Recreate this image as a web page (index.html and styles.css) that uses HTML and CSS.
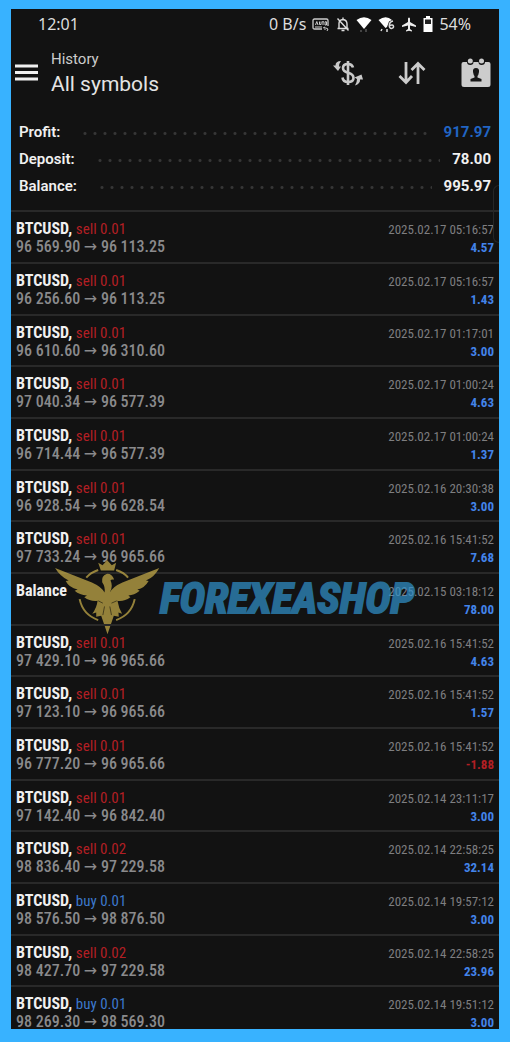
FILE: index.html
```html
<!DOCTYPE html>
<html lang="en">
<head>
<meta charset="utf-8">
<meta name="viewport" content="width=device-width, initial-scale=1">
<title>History</title>
<link rel="stylesheet" href="styles.css">
</head>
<body>
<div class="screen">
  <div class="status">
    <span class="clock">12:01</span>
    <div class="status-right">
      <span>0 B/s</span>
      <svg class="s-auto" viewBox="0 0 18 16" width="18" height="16"><path d="M10 13H2.500Q1 13 1 11.500V4.500Q1 3 2.500 3H14.500Q16 3 16 4.500V10" fill="none" stroke="#ccc" stroke-width="1.300"/><path d="M3.500 9l1.300-3.500L6 9M7.500 5.500v3h1.600v-3M10 5.800h2M11 5.800V9M13 5.800h1.500V9H13zM3 11h7M11 12l2-1v3M14 12l2 1-1 2" fill="none" stroke="#ccc" stroke-width="1"/></svg>
      <svg class="s-bell" viewBox="0 0 14 16" width="14" height="16"><path d="M3 12V7.500Q3 4 7 3.500Q11 4 11 8v4M1.500 12.500h11M7 1.500v2M5.500 14.500h3M1.500 2.500l11 12" fill="none" stroke="#ddd" stroke-width="1.400"/></svg>
      <svg class="s-wifi" viewBox="0 0 16 16" width="16" height="16"><path d="M.5 4Q8-1.500 15.500 4L8 13z" fill="#fff"/><path d="M5 14v2M10 13v3" stroke="#555" stroke-width="1.500"/></svg>
      <svg class="s-wifi6" viewBox="0 0 17 16" width="17" height="16"><path d="M.5 4Q8-1.500 14 4L11 5.500L9 11L7.500 12z" fill="#fff"/><path d="M15 5Q11 6 11.300 10Q11.500 12.500 13.500 12.400Q15.700 12.200 15.500 10.200Q15 8 11.500 9.500M4 13l-1 2M9 13v3" fill="none" stroke="#ddd" stroke-width="1.500"/></svg>
      <svg class="s-plane" viewBox="0 0 16 16" width="16" height="16"><path d="M7 6V2.500Q8 .5 9 2.500V6L15 9.500V11L9 9.500V13L11 14.500V15.500L8 14.800L5 15.500V14.500L7 13V9.500L1 11V9.500z" fill="#eee"/></svg>
      <svg class="s-batt" viewBox="0 0 10 16" width="10" height="16"><path d="M3 0h4v2h2.500v14H.5V2H3z" fill="#fff"/><path d="M2 3.500h6V8H2z" fill="#222"/></svg>
      <span>54%</span>
    </div>
  </div>

  <header class="bar">
    <button class="icon-btn" aria-label="Menu"><svg viewBox="0 0 23 17" width="23" height="17"><path d="M0 2h23M0 8.500h23M0 15h23" stroke="#f0f0f0" stroke-width="2.800"/></svg></button>
    <div class="titles"><p class="subtitle">History</p><h1>All symbols</h1></div>
    <div class="actions">
      <button class="icon-btn" aria-label="Currency"><svg viewBox="0 0 30 28" width="30" height="28"><g fill="none" stroke="#c9c9c9" stroke-width="2.600"><path d="M15 2v24" /><path d="M20 8.500Q19 5 15 5Q10 5 10 9Q10 12.500 15 13.700Q20.500 15 20.500 19Q20.500 23 15 23Q10 23 9.500 18.500"/></g><path d="M8 2Q2.500 2 2.500 6.500H0L5 12L8 7.500H6Q6 4.500 8 2zM22 26.500Q27.500 24.500 27 20.500H30L28.500 15.500L21.500 18.500L24 20Q24 23.500 22 26.500z" fill="#c9c9c9"/></svg></button>
      <button class="icon-btn" aria-label="Sort"><svg viewBox="0 0 28 24" width="28" height="24"><path d="M8 1v20M1.500 15L8 21.500L14 15M20 23V3M13.500 9L20 2.500L26.500 9" fill="none" stroke="#ccc" stroke-width="2.800"/></svg></button>
      <button class="icon-btn" aria-label="Period"><svg viewBox="0 0 30 30" width="30" height="30"><path d="M2.500 4H6Q6 7 9.300 7Q12.500 7 12.500 4H17.500Q17.500 7 20.500 7Q24 7 24 4H27.500Q29.500 4 29.500 6V26.500Q29.500 29 27 29H3Q.5 29 .5 26.500V6Q.5 4 2.500 4z" fill="#ccc"/><circle cx="9.300" cy="3" r="2.500" fill="#ccc"/><circle cx="20.500" cy="3" r="2.500" fill="#ccc"/><path d="M15 10Q18.500 10 18 14Q17.500 17 16.500 18V19.500L20.500 21V23.500H9.500V21L13.500 19.500V18Q12.500 17 12 14Q11.500 10 15 10z" fill="#171717"/></svg></button>
    </div>
  </header>

  <dl class="summary">
    <div class="sum-row"><dt>Profit:</dt><dd class="profit">917.97</dd></div>
    <div class="sum-row"><dt>Deposit:</dt><dd>78.00</dd></div>
    <div class="sum-row"><dt>Balance:</dt><dd>995.97</dd></div>
  </dl>

  <ul class="deals">
    <li><div><p class="name">BTCUSD, <span class="sell">sell 0.01</span></p><p class="price">96 569.90 → 96 113.25</p></div><div class="end"><time>2025.02.17 05:16:57</time><p class="gain">4.57</p></div><i class="edge-handle"></i></li>
    <li><div><p class="name">BTCUSD, <span class="sell">sell 0.01</span></p><p class="price">96 256.60 → 96 113.25</p></div><div class="end"><time>2025.02.17 05:16:57</time><p class="gain">1.43</p></div></li>
    <li><div><p class="name">BTCUSD, <span class="sell">sell 0.01</span></p><p class="price">96 610.60 → 96 310.60</p></div><div class="end"><time>2025.02.17 01:17:01</time><p class="gain">3.00</p></div></li>
    <li><div><p class="name">BTCUSD, <span class="sell">sell 0.01</span></p><p class="price">97 040.34 → 96 577.39</p></div><div class="end"><time>2025.02.17 01:00:24</time><p class="gain">4.63</p></div></li>
    <li><div><p class="name">BTCUSD, <span class="sell">sell 0.01</span></p><p class="price">96 714.44 → 96 577.39</p></div><div class="end"><time>2025.02.17 01:00:24</time><p class="gain">1.37</p></div></li>
    <li><div><p class="name">BTCUSD, <span class="sell">sell 0.01</span></p><p class="price">96 928.54 → 96 628.54</p></div><div class="end"><time>2025.02.16 20:30:38</time><p class="gain">3.00</p></div></li>
    <li><div><p class="name">BTCUSD, <span class="sell">sell 0.01</span></p><p class="price">97 733.24 → 96 965.66</p></div><div class="end"><time>2025.02.16 15:41:52</time><p class="gain">7.68</p></div></li>
    <li><div><p class="name">Balance</p></div><div class="end"><time>2025.02.15 03:18:12</time><p class="gain">78.00</p></div>
      <div class="watermark">
        <svg viewBox="44 60 316 226" width="105" height="75" fill="#ccb14b"><path d="M174 68L187 76L201 61L215 76L228 68L222 92H182z"/><g fill="none" stroke="#ccb14b" stroke-width="6"><path d="M174 90Q151 98 138 113M228 90Q252 98 264 113M118 178Q128 225 174 241M284 178Q274 225 228 241"/></g><path d="M44 84L155 128Q184 141 193 158Q196 141 186 127Q183 108 199 102Q215 100 222 119Q213 117 211 122Q220 139 209 158Q219 140 247 128L358 84Q344 111 318 122L326 123Q314 144 292 149L299 153Q282 167 265 167L271 172Q252 186 232 183Q236 206 246 222L235 218L236 231L221 228L202 284L183 228L168 231V218L156 222Q170 204 172 183Q151 186 132 172L140 167Q118 166 103 153L112 149Q86 143 76 123L85 122Q58 108 44 84z"/><path d="M174 183L188 190M230 183L214 190M193 200L188 226M209 200L214 226" fill="none" stroke="#28230f" stroke-width="2"/></svg>
        <span>FOREXEASHOP</span>
      </div></li>
    <li><div><p class="name">BTCUSD, <span class="sell">sell 0.01</span></p><p class="price">97 429.10 → 96 965.66</p></div><div class="end"><time>2025.02.16 15:41:52</time><p class="gain">4.63</p></div></li>
    <li><div><p class="name">BTCUSD, <span class="sell">sell 0.01</span></p><p class="price">97 123.10 → 96 965.66</p></div><div class="end"><time>2025.02.16 15:41:52</time><p class="gain">1.57</p></div></li>
    <li><div><p class="name">BTCUSD, <span class="sell">sell 0.01</span></p><p class="price">96 777.20 → 96 965.66</p></div><div class="end"><time>2025.02.16 15:41:52</time><p class="gain loss">-1.88</p></div></li>
    <li><div><p class="name">BTCUSD, <span class="sell">sell 0.01</span></p><p class="price">97 142.40 → 96 842.40</p></div><div class="end"><time>2025.02.14 23:11:17</time><p class="gain">3.00</p></div></li>
    <li><div><p class="name">BTCUSD, <span class="sell">sell 0.02</span></p><p class="price">98 836.40 → 97 229.58</p></div><div class="end"><time>2025.02.14 22:58:25</time><p class="gain">32.14</p></div></li>
    <li><div><p class="name">BTCUSD, <span class="buy">buy 0.01</span></p><p class="price">98 576.50 → 98 876.50</p></div><div class="end"><time>2025.02.14 19:57:12</time><p class="gain">3.00</p></div></li>
    <li><div><p class="name">BTCUSD, <span class="sell">sell 0.02</span></p><p class="price">98 427.70 → 97 229.58</p></div><div class="end"><time>2025.02.14 22:58:25</time><p class="gain">23.96</p></div></li>
    <li><div><p class="name">BTCUSD, <span class="buy">buy 0.01</span></p><p class="price">98 269.30 → 98 569.30</p></div><div class="end"><time>2025.02.14 19:51:12</time><p class="gain">3.00</p></div></li>
  </ul>
</div>
</body>
</html>
```
FILE: styles.css
```css
* { box-sizing: border-box; margin: 0; padding: 0; }

body {
  height: 100vh;
  padding: 9px 11px 13px;
  background: #38b2ff;
  font-family: Roboto, sans-serif;
  color: #f0f0f0;
}

.screen {
  display: flex;
  flex-direction: column;
  height: 100%;
  overflow: hidden;
  background: #121212;
}

.status {
  display: flex;
  align-items: center;
  justify-content: space-between;
  padding: 3px 28px 0 27px;
  font: 16px/24px "Noto Sans", sans-serif;
  color: #ddd;
}
.status-right { display: flex; align-items: center; gap: 6px; }

.bar { display: flex; align-items: center; padding: 11px 8px 0 4px; }
.icon-btn { display: flex; border: 0; background: none; }
.titles { flex: 1; padding-left: 13px; }
.subtitle { font-size: 15px; line-height: 24px; color: #ccc; }
h1 { font-size: 21px; line-height: 27px; font-weight: 400; color: #e4e4e4; }
.actions { display: flex; align-items: center; gap: 35px; }

.summary { padding: 21px 8px 10px; font-weight: 700; }
.sum-row { display: flex; align-items: center; line-height: 27px; }
.sum-row::after {
  content: "";
  order: 1;
  flex: 1;
  height: 3px;
  margin: 1px 12px 0 20px;
  background: radial-gradient(circle, #363636 1px, transparent 2px) 0 0 / 10px 3px repeat-x;
}
dt { font-size: 15px; font-weight: 600; }
dd { order: 2; font-size: 15px; }
.profit { color: #2165c4; }

.deals { list-style: none; font-family: "Roboto Condensed", "DejaVu Sans", sans-serif; }
.deals li {
  position: relative;
  display: flex;
  justify-content: space-between;
  height: 52px;
  padding: 8px 5px 0;
  border-top: 2px solid #292929;
}
.deals li:nth-child(3n) { height: 51px; }
.name, .price { font-size: 16px; line-height: 18px; }
.name { font-weight: 700; }
.name span { font-size: 15px; font-weight: 400; }
.price { font-weight: 500; color: #8a8a8c; }
.sell { color: #b21f24; }
.buy { color: #3c78cc; }
.end { text-align: right; }
time { display: block; font-size: 13px; line-height: 20px; color: #7e7e80; }
.gain { font-size: 13px; line-height: 16px; font-weight: 700; color: #4384ea; }
.loss { color: #b21f24; }

.edge-handle {
  position: absolute;
  top: -27px;
  right: 0;
  width: 6px;
  height: 58px;
  border: 1px solid #262626;
  border-right: 0;
  border-radius: 6px 0 0 6px;
}

.watermark {
  position: absolute;
  left: 44px;
  top: -14px;
  display: flex;
  align-items: center;
  opacity: 0.7;
}
.watermark span {
  font: italic 700 43px/46px "Roboto Condensed", Roboto, sans-serif;
  color: #3093cd;
  -webkit-text-stroke: 2px #3093cd;
}
```
